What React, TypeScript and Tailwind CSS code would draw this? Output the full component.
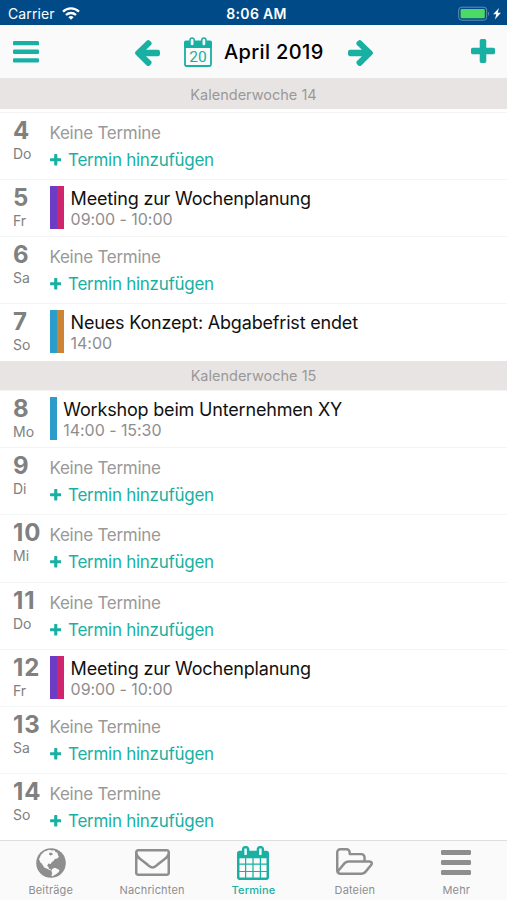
import React from "react";

type Entry = { n: number; d: string; title?: string; time?: string; colors?: string[]; week?: string; h: string };

const entries: Entry[] = [
  { n: 4, d: "Do", week: "Kalenderwoche 14", h: "h-[67px]" },
  { n: 5, d: "Fr", title: "Meeting zur Wochenplanung", time: "09:00 - 10:00", colors: ["bg-[#6c3cc4]", "bg-[#d0246c]"], h: "h-[57px]" },
  { n: 6, d: "Sa", h: "h-[67px]" },
  { n: 7, d: "So", title: "Neues Konzept: Abgabefrist endet", time: "14:00", colors: ["bg-[#2c9ccb]", "bg-[#cd8432]"], h: "h-[58px]" },
  { n: 8, d: "Mo", week: "Kalenderwoche 15", title: "Workshop beim Unternehmen XY", time: "14:00 - 15:30", colors: ["bg-[#2c9ccb]"], h: "h-[57px]" },
  { n: 9, d: "Di", h: "h-[67px]" },
  { n: 10, d: "Mi", h: "h-[68px]" },
  { n: 11, d: "Do", h: "h-[67px]" },
  { n: 12, d: "Fr", title: "Meeting zur Wochenplanung", time: "09:00 - 10:00", colors: ["bg-[#6c3cc4]", "bg-[#d0246c]"], h: "h-[57px]" },
  { n: 13, d: "Sa", h: "h-[67px]" },
  { n: 14, d: "So", h: "h-[68px]" },
];

const ARROW = "M1664 896v128q0 53-32.5 90.5t-84.5 37.5h-704l293 294q38 36 38 90t-38 90l-75 76q-37 37-90 37-52 0-91-37l-651-652q-37-37-37-90 0-52 37-91l651-650q38-38 91-38 52 0 90 38l75 74q38 38 38 91t-38 91l-293 293h704q52 0 84.5 37.5t32.5 90.5z";
const PLUS = "M1600 736v192q0 40-28 68t-68 28h-416v416q0 40-28 68t-68 28h-192q-40 0-68-28t-28-68v-416h-416q-40 0-68-28t-28-68v-192q0-40 28-68t68-28h416v-416q0-40 28-68t68-28h192q40 0 68 28t28 68v416h416q40 0 68 28t28 68z";
const ENVELOPE = "M1664 1504v-768q-32 36-69 66-268 206-426 338-51 43-83 67t-86.5 48.5-102.5 24.5h-2q-48 0-102.5-24.5t-86.5-48.5-83-67q-158-132-426-338-37-30-69-66v768q0 13 9.5 22.5t22.5 9.5h1472q13 0 22.5-9.5t9.5-22.5zm0-1051v-24.5l-.5-13-3-12.5-5.5-9-9-7.5-14-2.5h-1472q-13 0-22.5 9.5t-9.5 22.5q0 168 147 284 193 152 401 317 6 5 35 29.5t46 37.5 44.5 31.5 50.5 27.5 43 9h2q20 0 43-9t50.5-27.5 44.5-31.5 46-37.5 35-29.5q208-165 401-317 54-43 100.5-115.5t46.5-131.5zm128-37v1088q0 66-47 113t-113 47h-1472q-66 0-113-47t-47-113v-1088q0-66 47-113t113-47h1472q66 0 113 47t47 113z";
const FOLDER = "M1845 931q0-35-53-35h-1088q-40 0-85.5 21.5t-71.5 52.5l-294 363q-18 24-18 40 0 35 53 35h1088q40 0 86-22t71-53l294-363q18-22 18-39zm-1141-163h768v-160q0-40-28-68t-68-28h-576q-40 0-68-28t-28-68v-64q0-40-28-68t-68-28h-320q-40 0-68 28t-28 68v853l256-315q44-53 116-87.5t140-34.5zm1269 163q0 62-46 120l-295 363q-43 53-116 87.5t-140 34.5h-1088q-92 0-158-66t-66-158v-960q0-92 66-158t158-66h320q92 0 158 66t66 158v32h544q92 0 158 66t66 158v160h192q54 0 99 24.5t67 70.5q15 32 15 68z";
const CALENDAR = "M192 1664h288v-288h-288v288zm352 0h320v-288h-320v288zm-352-352h288v-320h-288v320zm352 0h320v-320h-320v320zm-352-384h288v-288h-288v288zm736 736h320v-288h-320v288zm-384-736h320v-288h-320v288zm768 736h288v-288h-288v288zm-384-352h320v-320h-320v320zm-352-864v-288q0-13-9.5-22.5t-22.5-9.5h-64q-13 0-22.5 9.5t-9.5 22.5v288q0 13 9.5 22.5t22.5 9.5h64q13 0 22.5-9.5t9.5-22.5zm736 864h288v-320h-288v320zm-384-384h320v-288h-320v288zm384 0h288v-288h-288v288zm32-480v-288q0-13-9.5-22.5t-22.5-9.5h-64q-13 0-22.5 9.5t-9.5 22.5v288q0 13 9.5 22.5t22.5 9.5h64q13 0 22.5-9.5t9.5-22.5zm384-64v1280q0 52-38 90t-90 38h-1408q-52 0-90-38t-38-90v-1280q0-52 38-90t90-38h128v-96q0-66 47-113t113-47h64q66 0 113 47t47 113v96h384v-96q0-66 47-113t113-47h64q66 0 113 47t47 113v96h128q52 0 90 38t38 90z";

function Glyph({ d, box, className }: { d: string; box: string; className: string }) {
  return (
    <svg viewBox={box} className={className} fill="currentColor" preserveAspectRatio="none">
      <path d={d} />
    </svg>
  );
}

function Bars({ className }: { className: string }) {
  return (
    <svg viewBox="0 0 26 22" className={className} fill="currentColor" preserveAspectRatio="none">
      <rect y="0" width="26" height="4.4" rx="1.2" />
      <rect y="8.8" width="26" height="4.4" rx="1.2" />
      <rect y="17.6" width="26" height="4.4" rx="1.2" />
    </svg>
  );
}

function Globe() {
  return (
    <svg viewBox="0 0 30 30" className="h-[30px] w-[30px]">
      <circle cx="15" cy="15" r="14.8" fill="#8e8e8e" />
      <path d="M5 6.8 8.4 3.6l5-1.8 2.4.8 2.8-.4.8 1.8 2 .8.6 2.4 1 1.6-1.8 1.6-2.4.6-1.4 2-1.8 1.2-.8 1.8-2.4-.4-1.2 2.2 1.4 1.4.4 1.8 2.2.4-.8 1-3.2-1.6-3-1.4-2.4-3.8-1.4-1.2L3 11.2z" fill="#fafafa" />
      <path d="m16.2 21 2.4-1.2 2 .8 2.8 1.4-.6 2-2.8 2.2-3.6 2-1-.4.8-2.6-.8-2.2z" fill="#fafafa" />
      <path d="m13.6 4.6 2.6.4.6 1.6-2.2.8-1.6-1z" fill="#8e8e8e" />
    </svg>
  );
}

function StatusBar() {
  return (
    <div className="grid h-[25px] shrink-0 grid-cols-3 items-center bg-[#004b87] pt-[2px] text-[14px] text-white">
      <div className="flex items-center gap-[7px] pl-[8px]">
        <span className="text-[14px] tracking-[.1px]">Carrier</span>
        <svg viewBox="0 0 18 13" className="h-[13px] w-[18px]" fill="none" stroke="white" strokeWidth="2.3">
          <path d="M1 4.7a11.5 11.5 0 0 1 16 0" />
          <path d="M4 8a7.3 7.3 0 0 1 10 0" />
          <path d="M6.4 10.2a3.8 3.8 0 0 1 5.2 0L9 12.8z" fill="white" stroke="none" />
        </svg>
      </div>
      <span className="pl-[6px] text-center text-[14px] font-semibold tracking-[.3px]">8:06 AM</span>
      <div className="flex items-center justify-end pr-[5px]">
        <svg viewBox="0 0 44 16" className="h-[16px] w-[44px]">
          <rect x=".7" y="1.2" width="28" height="13" rx="3" fill="none" stroke="#668fb5" />
          <rect x="2.6" y="3.1" width="24.2" height="9.2" rx="1.2" fill="#4cd964" />
          <path d="M30 5.6v4.4q2-2.2 0-4.4" fill="#668fb5" />
          <path d="m41 2-5.8 6.3h3.1l-1.4 5.2 6-6.7h-3.2z" fill="white" />
        </svg>
      </div>
    </div>
  );
}

function Header() {
  return (
    <header className="flex h-[53px] shrink-0 items-center bg-[#fafafa] text-[#18b0a3]">
      <Bars className="ml-[13px] mt-px h-[21.5px] w-[26px]" />
      <Glyph d={ARROW} box="192 181 1472 1558" className="ml-[96px] mt-[3px] h-[26px] w-[25px]" />
      <svg viewBox="0 0 28 30" className="ml-[24px] h-[30px] w-[28px]">
        <rect x="1" y="5" width="26" height="24" rx="1.5" fill="none" stroke="currentColor" strokeWidth="1.8" />
        <path d="M.1 5q0-1.5 1.7-1.5h24.4q1.7 0 1.7 1.5v6H.1z" fill="currentColor" />
        <rect x="6" y="1" width="4.2" height="8" rx="2.1" fill="#fafafa" stroke="currentColor" strokeWidth="1.5" />
        <rect x="17.8" y="1" width="4.2" height="8" rx="2.1" fill="#fafafa" stroke="currentColor" strokeWidth="1.5" />
        <text x="14" y="25.2" textAnchor="middle" fontSize="15.5" fontFamily="Roboto, sans-serif" fill="currentColor">20</text>
      </svg>
      <h1 className="ml-[12px] w-[101px] whitespace-nowrap text-[20px] font-medium tracking-[.35px] text-black">April 2019</h1>
      <Glyph d={ARROW} box="192 181 1472 1558" className="ml-[23px] mt-[3px] h-[26px] w-[25px] -scale-x-100" />
      <Glyph d={PLUS} box="192 128 1408 1408" className="-mt-px ml-auto mr-[12px] h-[24px] w-[24px]" />
    </header>
  );
}

function Row({ e }: { e: Entry }) {
  return (
    <div className={"flex shrink-0 border-t border-[#f4f4f4] pl-[13px] " + e.h}>
      <div className="w-[36.5px] shrink-0 pt-[4px] text-[#808080]">
        <div className="text-[24px] font-bold leading-[27px] tracking-[.8px]">{e.n}</div>
        <div className="text-[14px] leading-[19px]">{e.d}</div>
      </div>
      {e.title ? (
        <div className="flex pt-[6px]">
          <div className="flex h-[43px]">
            {e.colors!.map((c) => <div key={c} className={"w-[7.3px] " + c} />)}
          </div>
          <div className="pl-[6.5px] pt-[1px]">
            <div className="whitespace-nowrap text-[18px] leading-[23px] tracking-[-.18px] text-[#111]">{e.title}</div>
            <div className="text-[16px] leading-[19px] tracking-[-.05px] text-[#8e8e8e]">{e.time}</div>
          </div>
        </div>
      ) : (
        <div className="pt-[9px]">
          <div className="text-[17px] leading-[23px] tracking-[-.27px] text-[#999]">Keine Termine</div>
          <div className="flex items-center gap-[7px] pt-[3px] text-[17px] leading-[25px] tracking-[-.27px] text-[#18b0a3]">
            <Glyph d={PLUS} box="192 128 1408 1408" className="-mt-px h-[11.5px] w-[11.5px]" />
            Termin hinzufügen
          </div>
        </div>
      )}
    </div>
  );
}

function TabBar() {
  const tabs = [
    { label: "Beiträge", icon: <Globe /> },
    { label: "Nachrichten", icon: <Glyph d={ENVELOPE} box="0 256 1792 1408" className="h-[27px] w-[35px]" /> },
    { label: "Termine", icon: <Glyph d={CALENDAR} box="64 0 1664 1792" className="h-[34px] w-[32px]" />, active: true },
    { label: "Dateien", icon: <Glyph d={FOLDER} box="64 128 1909 1408" className="-mt-[3px] h-[27px] w-[37px]" /> },
    { label: "Mehr", icon: <Bars className="h-[25px] w-[30px]" /> },
  ];
  return (
    <nav className="grid h-[60px] shrink-0 grid-cols-5 border-t border-[#dedede] bg-[#fafafa]">
      {tabs.map((t) => (
        <div key={t.label} className={"flex flex-col items-center " + (t.active ? "text-[#18b0a3]" : "text-[#8e8e8e]")}>
          <div className="flex h-[43px] items-center">{t.icon}</div>
          <div className={"text-[11px] leading-[13px] tracking-[.15px] " + (t.active ? "font-medium" : "")}>{t.label}</div>
        </div>
      ))}
    </nav>
  );
}

export default function App() {
  return (
    <div className="flex h-[900px] w-[507px] flex-col overflow-hidden bg-white font-['Inter',sans-serif]">
      <StatusBar />
      <Header />
      <main className="flex min-h-0 flex-1 flex-col overflow-hidden">
        {entries.map((e) => (
          <React.Fragment key={e.n}>
            {e.week && (
              <div className={"flex shrink-0 items-center justify-center bg-[#e8e4e3] text-[14.5px] text-[#999] " + (e.n === 4 ? "mb-[3px] h-[31px] pt-[2px]" : "h-[29px] pt-px")}>
                {e.week}
              </div>
            )}
            <Row e={e} />
          </React.Fragment>
        ))}
      </main>
      <TabBar />
    </div>
  );
}
